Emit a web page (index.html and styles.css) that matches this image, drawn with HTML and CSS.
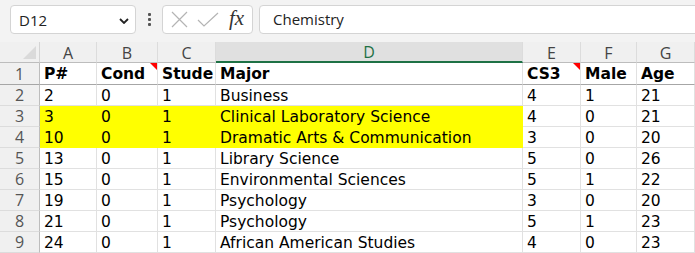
FILE: index.html
```html
<!DOCTYPE html>
<html lang="en">
<head>
    <meta charset="UTF-8">
    <title>Sheet</title>
    <link rel="stylesheet" href="styles.css">
</head>
<body>
    <div class="formula-bar">
        <div class="name-box">
            <span>D12</span>
            <svg class="chevron" width="10" height="6" viewBox="0 0 10 6"><path d="M1 1 L5 5 L9 1" fill="none" stroke="#222" stroke-width="1.8"/></svg>
        </div>
        <div class="dots"><i></i><i></i><i></i></div>
        <div class="fx-box">
            <svg width="17" height="17" viewBox="0 0 17 17"><path d="M1 1 L16 16 M16 1 L1 16" stroke="#b4b4b4" stroke-width="1.2"/></svg>
            <svg width="22" height="15" viewBox="0 0 22 15"><path d="M1 8 L7 14 L21 1" fill="none" stroke="#b4b4b4" stroke-width="1.2"/></svg>
            <span class="fx">fx</span>
        </div>
        <div class="formula-input">Chemistry</div>
    </div>

    <div class="sheet">
        <div class="corner"><span class="corner-tri"></span></div>
        <div class="col-hdr">A</div>
        <div class="col-hdr">B</div>
        <div class="col-hdr">C</div>
        <div class="col-hdr selected">D</div>
        <div class="col-hdr">E</div>
        <div class="col-hdr">F</div>
        <div class="col-hdr">G</div>

        <div class="row-hdr first">1</div>
        <div class="cell head">P#</div>
        <div class="cell head">Cond<span class="note"></span></div>
        <div class="cell head">Stude</div>
        <div class="cell head">Major</div>
        <div class="cell head">CS3<span class="note"></span></div>
        <div class="cell head">Male</div>
        <div class="cell head">Age</div>

        <div class="row-hdr">2</div>
        <div class="cell">2</div><div class="cell">0</div><div class="cell">1</div>
        <div class="cell">Business</div>
        <div class="cell">4</div><div class="cell">1</div><div class="cell">21</div>

        <div class="row-hdr">3</div>
        <div class="cell hl">3</div><div class="cell hl">0</div><div class="cell hl">1</div>
        <div class="cell hl">Clinical Laboratory Science</div>
        <div class="cell">4</div><div class="cell">0</div><div class="cell">21</div>

        <div class="row-hdr">4</div>
        <div class="cell hl">10</div><div class="cell hl">0</div><div class="cell hl">1</div>
        <div class="cell hl">Dramatic Arts &amp; Communication</div>
        <div class="cell">3</div><div class="cell">0</div><div class="cell">20</div>

        <div class="row-hdr">5</div>
        <div class="cell">13</div><div class="cell">0</div><div class="cell">1</div>
        <div class="cell">Library Science</div>
        <div class="cell">5</div><div class="cell">0</div><div class="cell">26</div>

        <div class="row-hdr">6</div>
        <div class="cell">15</div><div class="cell">0</div><div class="cell">1</div>
        <div class="cell">Environmental Sciences</div>
        <div class="cell">5</div><div class="cell">1</div><div class="cell">22</div>

        <div class="row-hdr">7</div>
        <div class="cell">19</div><div class="cell">0</div><div class="cell">1</div>
        <div class="cell">Psychology</div>
        <div class="cell">3</div><div class="cell">0</div><div class="cell">20</div>

        <div class="row-hdr">8</div>
        <div class="cell">21</div><div class="cell">0</div><div class="cell">1</div>
        <div class="cell">Psychology</div>
        <div class="cell">5</div><div class="cell">1</div><div class="cell">23</div>

        <div class="row-hdr">9</div>
        <div class="cell">24</div><div class="cell">0</div><div class="cell">1</div>
        <div class="cell">African American Studies</div>
        <div class="cell">4</div><div class="cell">0</div><div class="cell">23</div>
    </div>
</body>
</html>
```

FILE: styles.css
```css
body {
    margin: 0;
    width: 695px;
    height: 253px;
    overflow: hidden;
    background: #ffffff;
    font-family: "Open Sans", "Noto Sans", sans-serif;
}
.formula-bar {
    height: 42px;
    box-sizing: border-box;
    padding: 5px 0 0 10px;
    display: flex;
    align-items: flex-start;
    background: #f3f3f3;
}
.name-box {
    width: 126px;
    height: 29px;
    box-sizing: border-box;
    background: #fff;
    border: 1px solid #d4d4d4;
    border-radius: 4px;
    display: flex;
    align-items: center;
    justify-content: space-between;
    padding: 0 6px 0 8px;
    font-size: 15px;
    color: #222;
}
.chevron {
    margin-top: 2px;
}
.dots {
    width: 26px;
    height: 29px;
    display: flex;
    flex-direction: column;
    align-items: center;
    justify-content: center;
    gap: 2px;
}
.dots i {
    width: 3px;
    height: 3px;
    background: #555;
    border-radius: 1px;
}
.fx-box {
    width: 91px;
    height: 29px;
    box-sizing: border-box;
    background: #fff;
    border: 1px solid #d4d4d4;
    border-radius: 4px;
    display: flex;
    align-items: center;
    padding: 0 5px 0 8px;
    gap: 9px;
}
.fx {
    font-family: "Liberation Serif", serif;
    font-style: italic;
    font-size: 21px;
    color: #333;
    margin-top: -3px;
    margin-left: 1px;
}
.formula-input {
    flex: 1;
    height: 29px;
    box-sizing: border-box;
    margin-left: 6px;
    margin-right: -10px;
    background: #fff;
    border: 1px solid #d4d4d4;
    border-radius: 4px;
    padding: 0 13px;
    line-height: 27px;
    font-size: 15px;
    color: #222;
}
.sheet {
    display: grid;
    grid-template-columns: 40px 57px 61px 58px 307px 58px 56px 58px;
    grid-template-rows: 21px 22px repeat(8, 21px);
}
.corner {
    background: #f0f0f0;
    border-right: 1px solid #d4d4d4;
    border-bottom: 1px solid #bdbdbd;
    position: relative;
}
.corner-tri {
    position: absolute;
    right: 3px;
    bottom: 3px;
    width: 0;
    height: 0;
    border-left: 13px solid transparent;
    border-bottom: 13px solid #dadada;
}
.col-hdr {
    background: #f0f0f0;
    border-right: 1px solid #dcdcdc;
    border-bottom: 1px solid #bdbdbd;
    text-align: center;
    font-size: 16px;
    line-height: 22px;
    color: #444;
}
.col-hdr.selected {
    background: #e0e0e0;
    color: #1e7145;
    border-bottom: 2px solid #1e7145;
    line-height: 21px;
}
.row-hdr {
    background: #f0f0f0;
    border-right: 1px solid #bdbdbd;
    border-bottom: 1px solid #dcdcdc;
    text-align: center;
    font-size: 16px;
    line-height: 21px;
    color: #555;
}
.row-hdr.first {
    border-bottom-color: #a6a6a6;
    line-height: 22px;
}
.cell {
    position: relative;
    border-right: 1px solid #e1e1e1;
    border-bottom: 1px solid #e1e1e1;
    padding: 1px 0 0 4px;
    font-family: "DejaVu Sans", Verdana, sans-serif;
    font-size: 15.5px;
    line-height: 20px;
    color: #000;
    white-space: nowrap;
    overflow: hidden;
}
.cell.head {
    font-weight: bold;
    line-height: 21px;
    border-bottom-color: #a6a6a6;
}
.cell.hl {
    background: #ffff00;
    border-right-color: #ffff00;
    border-bottom-color: #ffff00;
}
.note {
    position: absolute;
    top: 0;
    right: 0;
    width: 0;
    height: 0;
    border-left: 7px solid transparent;
    border-top: 7px solid #ff0000;
}
```
